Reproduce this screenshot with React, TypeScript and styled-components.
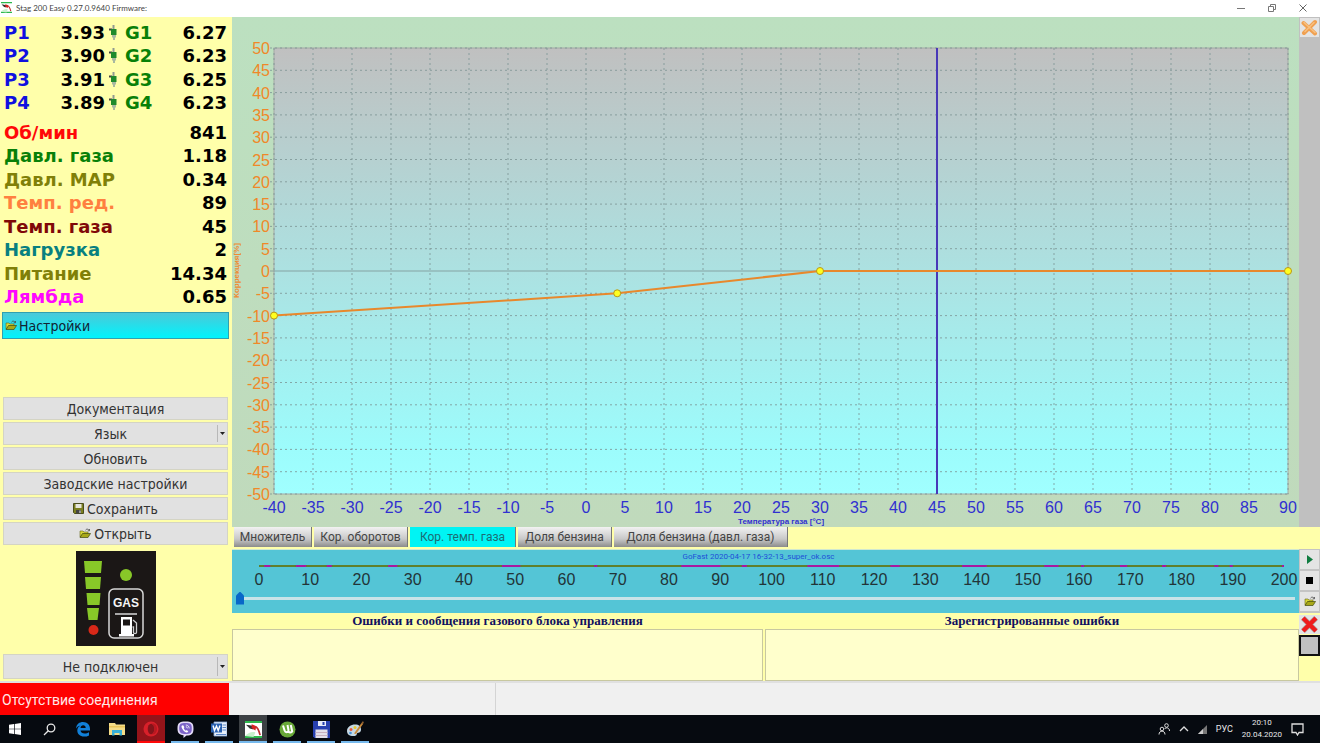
import React, { useState } from "react";
import styled, { createGlobalStyle } from "styled-components";

const GlobalStyle = createGlobalStyle`
  *, *::before, *::after { box-sizing: border-box; }
  body { margin: 0; background: #f0f0f0; }
  button, select, textarea, input { font: inherit; color: inherit; margin: 0; border-radius: 0; }
`;

const ui = `"DejaVu Sans Condensed", "DejaVu Sans", sans-serif`;
const arial = `"Liberation Sans", Arial, sans-serif`;
const segoe = `Roboto, "Open Sans", sans-serif`;

const Page = styled.div`
  display: flex;
  flex-direction: column;
  min-height: 100vh;
  font-family: ${ui};
  font-size: 14px;
  color: #333;
`;

/* ---------- window caption ---------- */

const TitleBar = styled.header`
  display: flex;
  align-items: center;
  height: 17px;
  padding: 0 11px 2px 1px;
  background: #fff;
  color: #444;
`;

const TitleText = styled.h1`
  flex: 1;
  margin: 0 0 0 4px;
  font: 400 8px/12px Lato, sans-serif;
`;

const CaptionButtons = styled.div`
  display: flex;
  gap: 19px;
`;

const CaptionButton = styled.button`
  display: grid;
  place-items: center;
  width: 12px;
  height: 12px;
  padding: 0;
  border: 0;
  background: none;
`;

/* ---------- frame ---------- */

const Body = styled.main`
  flex: 1;
  display: grid;
  grid-template-columns: 232px minmax(0, 1fr);
  background: #ffffaa;
`;

const Sidebar = styled.aside`
  display: flex;
  flex-direction: column;
  padding: 4px 3px 2px 3px;
`;

const Workspace = styled.section`
  display: flex;
  flex-direction: column;
`;

/* ---------- readings ---------- */

const Readings = styled.table<{ $height: number }>`
  width: 223px;
  height: ${(p) => p.$height}px;
  margin-left: 1px;
  border-collapse: collapse;
  font: 700 18px/18px "DejaVu Sans", sans-serif;
  color: #000;

  td, th { padding: 0; vertical-align: middle; white-space: nowrap; }
  td { text-align: right; }
`;

const InjectorReadings = styled(Readings)`
  table-layout: fixed;
`;

const ReadingName = styled.th<{ $color: string; $width?: number }>`
  width: ${(p) => (p.$width ? `${p.$width}px` : "auto")};
  text-align: left;
  color: ${(p) => p.$color};
`;

const PetrolCell = styled.td`
  width: 65px;
`;

const InjectorCell = styled.td`
  width: 20px;
  svg { display: block; margin-left: 3px; }
`;

const Gap = styled.div<{ $size: number }>`
  height: ${(p) => p.$size}px;
`;

/* ---------- sidebar controls ---------- */

const SettingsButton = styled.button`
  display: flex;
  align-items: center;
  gap: 2px;
  height: 27px;
  margin: 3px 0 0 -1px;
  padding: 0 2px;
  border: 1px solid #30a0b0;
  background: linear-gradient(#4cc8d8, #00f4fc);
  color: #123;
`;

const Spacer = styled.div`
  flex: 1;
`;

const ButtonStack = styled.div`
  display: grid;
  grid-auto-rows: 1fr;
  gap: 2px;
  height: 148px;
  margin-right: 1px;
`;

const PanelButton = styled.button`
  display: flex;
  align-items: center;
  justify-content: center;
  gap: 3px;
  padding: 0;
  border: 1px solid #d4d4c4;
  background: #e1e1e1;
`;

const SelectFrame = styled.div`
  display: grid;
  grid-template-columns: minmax(0, 1fr) 10px;
  border: 1px solid #d4d4c4;
  background: #e1e1e1;
`;

const Select = styled.select`
  min-width: 0;
  padding: 0;
  border: 0;
  appearance: none;
  background: none;
  text-align-last: center;
`;

const SelectArrow = styled.span`
  display: grid;
  place-items: center;
  margin: 2px 0;
  border-left: 1px solid #b8b8b8;
`;

const GasSwitch = styled.button`
  align-self: center;
  width: 80px;
  height: 95px;
  margin: 6px 0 8px;
  padding: 0;
  border: 0;
  background: #1b1716;
  svg { display: block; }
`;

const ConnectionBox = styled.div`
  display: grid;
  height: 25px;
  margin-right: 1px;
`;

/* ---------- chart ---------- */

const ChartRow = styled.div`
  flex: 1;
  display: grid;
  grid-template-columns: minmax(0, 1fr) 21px;
`;

const ChartPanel = styled.div`
  display: grid;
  grid-template-columns: 10px minmax(0, 1fr);
  padding: 31px 11px 33px 0;
  background: linear-gradient(#bce0c0, #c0dabc);
`;

const AxisTitleY = styled.div`
  display: flex;
  align-items: center;
  justify-content: center;
  writing-mode: vertical-rl;
  transform: rotate(180deg);
  font: 700 8px/10px ${arial};
  color: #f08a30;
`;

const Plot = styled.svg`
  display: block;
  width: calc(100% - 32px);
  height: 100%;
  margin-left: 32px;
  overflow: visible;
  font-family: ${arial};
  font-size: 16px;
`;

const ToolStrip = styled.div`
  padding: 1px 1px 0;
  background: #c0c0c0;
`;

const ToolButton = styled.button`
  display: grid;
  place-items: center;
  width: 100%;
  height: 19px;
  padding: 0;
  border: 0;
  background: #e4e4e4;
`;

/* ---------- tabs ---------- */

const Tabs = styled.div`
  display: flex;
  gap: 2px;
  height: 22px;
  padding: 0 2px 2px;
`;

const Tab = styled.button<{ $active?: boolean; $width: number }>`
  width: ${(p) => p.$width}px;
  padding: 0;
  border: 0;
  border-right: 1px solid #777;
  background: ${(p) => (p.$active ? "#00f4f4" : "linear-gradient(#f2f2f2, #c8c8c8 60%, #8c8c8c)")};
  font: 12px/18px ${segoe};
  color: ${(p) => (p.$active ? "#1c6c74" : "#444")};
  white-space: nowrap;
`;

/* ---------- recorder ---------- */

const RecorderRow = styled.div`
  display: grid;
  grid-template-columns: minmax(0, 1fr) 21px;
  background: #c4c4c4;
`;

const Recorder = styled.div`
  display: flex;
  flex-direction: column;
  height: 64px;
  border-top: 1px solid #d0e8d0;
  background: #54c5d6;
`;

const FileName = styled.div`
  height: 15px;
  padding-right: 14px;
  text-align: center;
  font: 8px/14px ${segoe};
  color: #2050d8;
`;

const Timeline = styled.svg`
  display: block;
  width: calc(100% - 42px);
  height: 26px;
  margin-left: 27px;
  overflow: visible;
  font-family: ${arial};
  font-size: 16px;
`;

const Seek = styled.input`
  width: calc(100% - 8px);
  height: 14px;
  margin: 0 4px;
  appearance: none;
  background: linear-gradient(#c8e4e8, #c8e4e8) center / 100% 3px no-repeat;

  &::-webkit-slider-thumb {
    appearance: none;
    width: 8px;
    height: 13px;
    background: #0868c8;
    clip-path: polygon(0 30%, 50% 0, 100% 30%, 100% 100%, 0 100%);
  }
`;

const RecorderTools = styled.div`
  display: grid;
  grid-template-rows: repeat(3, 19px);
  gap: 2px;
  padding: 1px;
`;

/* ---------- error lists ---------- */

const Errors = styled.div`
  display: grid;
  grid-template-columns: minmax(0, 1fr) 21px;
`;

const ErrorLists = styled.div`
  display: grid;
  grid-template-columns: 531px minmax(0, 1fr);
  gap: 2px;
`;

const ErrorField = styled.label`
  display: flex;
  flex-direction: column;
  font: 700 13px/16px "Liberation Serif", serif;
  color: #101060;
  text-align: center;
`;

const ErrorText = styled.textarea`
  height: 52px;
  border: 1px solid #c8c8a0;
  outline: 0;
  background: #ffffcc;
  resize: none;
`;

const ErrorTools = styled.div`
  padding: 2px 0 0;
`;

const Swatch = styled.button`
  display: block;
  width: 21px;
  height: 21px;
  margin-top: 1px;
  border: 2px solid #111;
  background: #c0c0c0;
`;

/* ---------- status line ---------- */

const StatusBar = styled.footer`
  display: grid;
  grid-template-columns: 229px 267px minmax(0, 1fr);
  height: 34px;
  border-top: 2px solid #e0e0e0;
  background: #f0f0f0;
`;

const ConnectionStatus = styled.div`
  padding-left: 2px;
  background: #ff0000;
  color: #ffe8e8;
  font: 14px/34px ${segoe};
`;

const StatusCell = styled.div`
  border-right: 1px solid #d4d4d4;
`;

/* ---------- taskbar ---------- */

const Taskbar = styled.nav`
  display: flex;
  height: 28px;
  background: #060a10;
  color: #e8e8e8;
`;

const TaskList = styled.div`
  display: flex;
  flex: 1;
  gap: 6px;
  padding-left: 1px;
`;

const Task = styled.button<{ $bg?: string; $line?: string }>`
  display: grid;
  place-items: center;
  width: 28px;
  height: 28px;
  padding: 2px 0 0;
  border: 0;
  border-bottom: 2px solid ${(p) => p.$line ?? "transparent"};
  background: ${(p) => p.$bg ?? "none"};
`;

const Tray = styled.div`
  display: flex;
  align-items: center;
  gap: 9px;
  padding-right: 16px;
  font: 9px/12px ${segoe};
`;

const Clock = styled.time`
  text-align: center;
  font-size: 8px;
`;

/* ---------- drawings ---------- */

const FolderIcon = () => (
  <svg width="12" height="11" viewBox="0 0 12 11" aria-hidden="true">
    <path d="M1 9V3h3l1 1h4v2H4z" fill="#d8d838" stroke="#66661a" strokeWidth="0.6" />
    <path d="M1 9.500l2.500-4H11.500L9 9.500z" fill="#a8a818" stroke="#444a10" strokeWidth="0.7" />
    <path d="M6.500 2.200c1-1.500 2.500-1.300 3.500 0M10.500 1v1.800H8.800" fill="none" stroke="#444" strokeWidth="0.800" />
  </svg>
);

const DiskIcon = () => (
  <svg width="11" height="11" viewBox="0 0 11 11" aria-hidden="true">
    <path d="M.5.5h10v10H1.500l-1-1z" fill="#7c8020" stroke="#4a4d1c" />
    <path d="M2.500 1h6v4h-6z" fill="#e6e6dc" />
    <path d="M3 7h5v3.500H3z" fill="#444" />
    <path d="M6.500 7.500h1V10h-1z" fill="#eee" />
  </svg>
);

const InjectorIcon = () => (
  <svg width="10" height="16" viewBox="0 0 10 16" aria-hidden="true">
    <path d="M4.500 0h2v4h-2z" fill="#909a90" />
    <path d="M1 3.500h3v2H1z" fill="#444" />
    <path d="M3 4h5.500v6H3z" fill="#1e8a2c" />
    <path d="M4 10h4v2.500H4zM5 12.500h2v2.500H5z" fill="#a8b8a0" />
  </svg>
);

const DownArrow = () => (
  <svg width="5" height="3" viewBox="0 0 5 3" aria-hidden="true">
    <path d="M0 0h5L2.500 3z" fill="#222" />
  </svg>
);

const StagLogo = ({ size }: { size: number }) => (
  <svg width={size} height={size} viewBox="0 0 18 18" aria-hidden="true">
    <path d="M0 0h18v18H0z" fill="#fff" />
    <path d="M0 0h18v2H0zM0 16h18v2H0z" fill="#2cb84c" />
    <path d="M1 4c3 0 5 1 7 1l1 4-4-1z" fill="#333" />
    <path d="M7 3.500l5 2-1 4.500-4-2.500z" fill="#d82020" />
    <path d="M11 6c3 1 4 5 5 9" fill="none" stroke="#c03030" strokeWidth="1.800" />
    <path d="M0 16c4-4 7-5 11-4l-2 5z" fill="#c8f0cc" />
  </svg>
);

const GasPanelIcon = () => (
  <svg width="80" height="95" viewBox="0 0 80 95" role="img" aria-label="GAS">
    <g fill="#88c828">
      <path d="M8 10h18l-1 12H9z" />
      <path d="M9 26h16l-1 12H10z" />
      <path d="M10.500 42h14l-1 12h-12z" />
      <path d="M11 57h12l-1.500 12h-9z" />
      <circle cx="50" cy="24" r="6" />
    </g>
    <circle cx="17.500" cy="79" r="5" fill="#d82818" />
    <rect x="33" y="38" width="34" height="49" rx="5" fill="none" stroke="#d8d8d8" strokeWidth="1.500" />
    <text x="50" y="56" textAnchor="middle" fill="#f4f4f4" fontFamily="Liberation Sans, sans-serif" fontWeight="700" fontSize="12">GAS</text>
    <path d="M39 63h22" stroke="#d8d8d8" strokeWidth="1.500" />
    <path d="M45 66h11v17h2v2.500H43V83h2z" fill="#fff" />
    <path d="M47 68.500h7v6h-7z" fill="#1b1716" />
    <path d="M57 69l3.500 3v9.500c0 1.500-3 1.500-3 0V76h-1" fill="none" stroke="#d0d0d0" strokeWidth="1.300" />
  </svg>
);

/* ---------- data ---------- */

const injectors = [
  { n: 1, petrol: "3.93", gas: "6.27" },
  { n: 2, petrol: "3.90", gas: "6.23" },
  { n: 3, petrol: "3.91", gas: "6.25" },
  { n: 4, petrol: "3.89", gas: "6.23" },
];

const sensors = [
  { name: "Об/мин", value: "841", color: "#ff0808" },
  { name: "Давл. газа", value: "1.18", color: "#088008" },
  { name: "Давл. MAP", value: "0.34", color: "#808008" },
  { name: "Темп. ред.", value: "89", color: "#ff8040" },
  { name: "Темп. газа", value: "45", color: "#800808" },
  { name: "Нагрузка", value: "2", color: "#088080" },
  { name: "Питание", value: "14.34", color: "#808008" },
  { name: "Лямбда", value: "0.65", color: "#ff08ff" },
];

const curve: [number, number][] = [[-40, -10], [4, -5], [30, 0], [90, 0]];
const currentTemperature = 45;

const range = (from: number, to: number, step: number) =>
  Array.from({ length: (to - from) / step + 1 }, (_, i) => from + i * step);

const px = (t: number) => `${((t + 40) / 130) * 100}%`;
const py = (c: number) => `${50 - c}%`;

const petrolSpans: [number, number][] = [
  [1, 2.200], [7.200, 9.200], [13.200, 14.200], [25.200, 27], [47.400, 51], [65.400, 66], [82.400, 90],
  [94.200, 95.200], [107, 113.200], [123.200, 125], [137.200, 142], [153.200, 156], [160.400, 161],
  [168, 169.400], [176.200, 177], [186.400, 187.200], [189.400, 190], [199.600, 200],
];

const tabs = [
  { name: "Множитель", width: 78 },
  { name: "Кор. оборотов", width: 94 },
  { name: "Кор. темп. газа", width: 106 },
  { name: "Доля бензина", width: 94 },
  { name: "Доля бензина (давл. газа)", width: 174 },
];

/* ---------- parts ---------- */

function CorrectionChart() {
  return (
    <ChartPanel>
      <AxisTitleY>Коррекция[%]</AxisTitleY>
      <Plot role="img" aria-label="Коррекция по температуре газа">
        <defs>
          <linearGradient id="plotFill" x1="0" y1="0" x2="0" y2="1">
            <stop offset="0" stopColor="#c0c0c0" />
            <stop offset="0.900" stopColor="#9cfcfc" />
            <stop offset="1" stopColor="#a0ffff" />
          </linearGradient>
        </defs>
        <rect width="100%" height="100%" fill="url(#plotFill)" stroke="#a4a8a4" />
        {range(-50, 50, 5).map((c) => (
          <g key={c}>
            <line x1="-4" x2="100%" y1={py(c)} y2={py(c)} stroke="#7c9494" strokeOpacity="0.800" strokeDasharray={c === 0 ? undefined : "2 3"} />
            <text x="-4" y={py(c)} dy="6" textAnchor="end" fill="#f08828">{c}</text>
          </g>
        ))}
        {range(-40, 90, 5).map((t) => (
          <g key={t}>
            <line x1={px(t)} x2={px(t)} y1="0" y2="100%" stroke="#7c9494" strokeOpacity="0.800" strokeDasharray="2 3" />
            <text x={px(t)} y="100%" dy="19" textAnchor="middle" fill="#3030d0">{t}</text>
          </g>
        ))}
        <line x1={px(currentTemperature)} x2={px(currentTemperature)} y1="0" y2="100%" stroke="#4838b8" strokeWidth="2" />
        {curve.slice(1).map(([t, c], i) => (
          <line key={t} x1={px(curve[i][0])} y1={py(curve[i][1])} x2={px(t)} y2={py(c)} stroke="#e8882c" strokeWidth="2" />
        ))}
        {curve.map(([t, c]) => (
          <circle key={t} cx={px(t)} cy={py(c)} r="3.500" fill="#ffff20" stroke="#b89818" />
        ))}
        <text x="50%" y="100%" dy="30" textAnchor="middle" fontSize="8" fontWeight="700" fill="#3030d0">
          Температура газа [°C]
        </text>
      </Plot>
    </ChartPanel>
  );
}

function RecorderPanel() {
  const [position, setPosition] = useState(0);
  return (
    <RecorderRow>
      <Recorder>
        <FileName>GoFast 2020-04-17 16-32-13_super_ok.osc</FileName>
        <Timeline aria-hidden="true">
          <rect width="100%" height="2" y="0" fill="#60802c" />
          {petrolSpans.map(([a, b]) => (
            <rect key={a} x={`${a / 2}%`} width={`${(b - a) / 2}%`} height="2" fill="#a818a0" />
          ))}
          {range(0, 200, 10).map((v) => (
            <text key={v} x={`${v / 2}%`} y="20" textAnchor="middle" fill="#223438">{v}</text>
          ))}
        </Timeline>
        <Seek
          type="range"
          min={0}
          max={200}
          value={position}
          aria-label="Позиция записи"
          onChange={(e) => setPosition(Number(e.target.value))}
        />
      </Recorder>
      <RecorderTools>
        <ToolButton aria-label="Воспроизвести">
          <svg width="6" height="9" viewBox="0 0 6 9"><path d="M0 0l6 4.500L0 9z" fill="#107c40" /></svg>
        </ToolButton>
        <ToolButton aria-label="Стоп">
          <svg width="7" height="7"><rect width="7" height="7" fill="#000" /></svg>
        </ToolButton>
        <ToolButton aria-label="Открыть запись"><FolderIcon /></ToolButton>
      </RecorderTools>
    </RecorderRow>
  );
}

function WindowsTaskbar() {
  const blue = "#76b9ed";
  return (
    <Taskbar aria-label="Панель задач">
      <TaskList>
        <Task aria-label="Пуск">
          <svg width="12" height="12" viewBox="0 0 12 12" fill="#fff">
            <path d="M0 1.700l5-.7v4.700H0zM5.700.9L12 0v5.700H5.700zM0 6.300h5V11l-5-.7zM5.700 6.300H12V12l-6.300-.9z" />
          </svg>
        </Task>
        <Task aria-label="Поиск">
          <svg width="13" height="13" viewBox="0 0 13 13" fill="none" stroke="#e8e8e8" strokeWidth="1.300">
            <circle cx="8" cy="5" r="3.800" /><path d="M5.300 7.800L1 12" />
          </svg>
        </Task>
        <Task aria-label="Edge">
          <svg width="16" height="16" viewBox="0 0 16 16">
            <path d="M1 7.500C1.500 3 4.500 1 8 1c4.500 0 7 3.200 7 7v1.500H5.500c.2 2 2 3 4.200 3 1.700 0 3-.5 4.300-1.300v3.200c-1.500.8-3 1.200-5 1.200-4 0-6.700-2.400-6.700-6 0-2.200 1.200-4 3.200-5C3.500 5.200 2 6 1 7.500zM5.500 7h5.200c0-1.800-1-2.700-2.500-2.700S5.700 5.300 5.500 7z" fill="#1180d8" />
          </svg>
        </Task>
        <Task aria-label="Проводник">
          <svg width="16" height="14" viewBox="0 0 16 14">
            <path d="M0 1h6l1 1.500h9V13H0z" fill="#f4dc88" /><path d="M0 4h16v1.500H0z" fill="#e8c458" />
            <path d="M3 8h10v5.500h-2.500V11h-5v2.500H3z" fill="#38b0d8" />
          </svg>
        </Task>
        <Task aria-label="Opera" $bg="#94141a" $line="#ff0808">
          <svg width="16" height="16" viewBox="0 0 16 16">
            <circle cx="8" cy="8" r="7.500" fill="#d8202a" /><ellipse cx="8" cy="8" rx="3.300" ry="5.200" fill="#84141a" />
            <path d="M8 2.800c4-1 6 2 6 5.200s-2 6-6 5.200c3-.5 3.300-3 3.300-5.200S11 3.300 8 2.800z" fill="#b81820" />
          </svg>
        </Task>
        <Task aria-label="Viber" $line={blue}>
          <svg width="17" height="17" viewBox="0 0 17 17">
            <path d="M8.500.5c6 0 8 1.500 8 7s-2 7-7 7L6.500 17v-2.800C2 13.500.5 12 .5 7.500c0-5.500 2-7 8-7z" fill="#e4dcf8" />
            <path d="M8.500 2c5 0 6.300 1 6.300 5.500s-1.500 5.500-6 5.500-6.600-1-6.600-5.500S3.500 2 8.500 2z" fill="#7c64c8" />
            <path d="M5 4.500c-.8.800-.6 1.600.1 3 1 1.900 2.300 3.200 4 3.900 1 .4 1.600 0 2.200-.9L9.800 9l-.9.700C7.800 9.100 7 8.200 6.700 7l.7-.8-1.200-2z" fill="#fff" />
            <path d="M8.800 4c2.200.1 3.300 1.400 3.400 3.400M8.900 5.700c1 .1 1.500.7 1.600 1.600" fill="none" stroke="#fff" strokeWidth="0.800" />
          </svg>
        </Task>
        <Task aria-label="Word" $line={blue}>
          <svg width="16" height="16" viewBox="0 0 16 16">
            <path d="M3 1h13v14H3z" fill="#e8f0fa" stroke="#88a8d8" strokeWidth="0.800" />
            <path d="M11.500 4H15M11.500 6.500H15M11.500 9H15M5 13.500h10" stroke="#5c88c8" />
            <path d="M0 2.500h11v9H0z" fill="#2860b0" />
            <path d="M2 4.500l1.500 5 2-4.500 1.700 4.500 1.800-5" fill="none" stroke="#fff" strokeWidth="1.400" />
          </svg>
        </Task>
        <Task aria-label="Stag 200 Easy" $bg="#3c4044" $line={blue}><StagLogo size={17} /></Task>
        <Task aria-label="uTorrent" $line={blue}>
          <svg width="17" height="17" viewBox="0 0 17 17">
            <circle cx="8.500" cy="8.500" r="8" fill="#68a838" />
            <path d="M4 4.500l1.600 5c.8 2.500 4.300 2 3.800-.7L8.500 4M9.200 10c.8 1.800 2.600 1.800 4 .5L11.800 4" fill="none" stroke="#fff" strokeWidth="2" />
          </svg>
        </Task>
        <Task aria-label="Total Commander" $line={blue}>
          <svg width="17" height="17" viewBox="0 0 17 17">
            <path d="M0 0h17v17H1.500L0 15.500z" fill="#2840b0" /><path d="M5 0h8v5H5z" fill="#e8ecfa" />
            <path d="M9.500 1h2v3h-2z" fill="#2840b0" /><path d="M2.500 8.500h12V17h-12z" fill="#e4e0ea" /><path d="M2.500 11h12v1h-12zM2.500 14h12v1h-12z" fill="#c8b0c0" />
          </svg>
        </Task>
        <Task aria-label="Paint" $line={blue}>
          <svg width="18" height="17" viewBox="0 0 18 17">
            <path d="M1 10c0-4 4-6.500 8-6.500s6 2 6 5-2 3-3.500 3.500.5 3-4 3S1 13 1 10z" fill="#c4d8e4" />
            <circle cx="5" cy="8.500" r="1.500" fill="#e85838" /><circle cx="9" cy="6.500" r="1.500" fill="#e8c830" /><circle cx="4.500" cy="12" r="1.300" fill="#4890d8" />
            <path d="M8 12.500L15.500 2l1.500 1-7 10z" fill="#c88838" /><path d="M15 2.500L17 0l.8 1.500L16.500 4z" fill="#906030" />
          </svg>
        </Task>
      </TaskList>
      <Tray>
        <svg width="12" height="12" viewBox="0 0 12 12" fill="none" stroke="#ddd" aria-hidden="true">
          <circle cx="4" cy="6" r="1.800" /><path d="M1 11.500c0-4.500 6-4.500 6 0" />
          <circle cx="8.500" cy="2.500" r="1.800" /><path d="M6.500 6c1.500-2 5-1.500 5 2" />
        </svg>
        <svg width="10" height="6" viewBox="0 0 10 6" fill="none" stroke="#ddd" strokeWidth="1.300" aria-hidden="true"><path d="M1 5l4-4 4 4" /></svg>
        <svg width="9" height="9" viewBox="0 0 9 9" aria-hidden="true">
          <path d="M0 9L9 0v9z" fill="#777" /><path d="M0 9l5-5v5z" fill="#ccc" />
        </svg>
        <span>РУС</span>
        <Clock dateTime="2020-04-20T20:10">20:10<br />20.04.2020</Clock>
        <svg width="13" height="13" viewBox="0 0 13 13" fill="none" stroke="#ddd" strokeWidth="1.300" aria-hidden="true">
          <path d="M1 1h11v8.500H8L6.500 12 5 9.500H1z" />
        </svg>
      </Tray>
    </Taskbar>
  );
}

export default function App() {
  const [tab, setTab] = useState(2);
  return (
    <Page>
      <GlobalStyle />
      <TitleBar>
        <StagLogo size={11} />
        <TitleText>Stag 200 Easy 0.27.0.9640 Firmware:</TitleText>
        <CaptionButtons>
          <CaptionButton aria-label="Свернуть"><svg width="8" height="8"><path d="M0 4.500h8" stroke="#777" /></svg></CaptionButton>
          <CaptionButton aria-label="Развернуть">
            <svg width="8" height="8" fill="none" stroke="#777"><path d="M.5 2.500h5v5h-5zM2.500 2V.5h5v5H6" /></svg>
          </CaptionButton>
          <CaptionButton aria-label="Закрыть"><svg width="8" height="8"><path d="M.5.5l7 7M7.500.5l-7 7" stroke="#666" /></svg></CaptionButton>
        </CaptionButtons>
      </TitleBar>

      <Body>
        <Sidebar>
          <InjectorReadings $height={94}>
            <tbody>
              {injectors.map((i) => (
                <tr key={i.n}>
                  <ReadingName scope="row" $color="#1010e0" $width={36}>P{i.n}</ReadingName>
                  <PetrolCell>{i.petrol}</PetrolCell>
                  <InjectorCell><InjectorIcon /></InjectorCell>
                  <ReadingName scope="row" $color="#088008" $width={36}>G{i.n}</ReadingName>
                  <td>{i.gas}</td>
                </tr>
              ))}
            </tbody>
          </InjectorReadings>
          <Gap $size={6} />
          <Readings $height={188}>
            <tbody>
              {sensors.map((s) => (
                <tr key={s.name}>
                  <ReadingName scope="row" $color={s.color}>{s.name}</ReadingName>
                  <td>{s.value}</td>
                </tr>
              ))}
            </tbody>
          </Readings>

          <SettingsButton><FolderIcon />Настройки</SettingsButton>
          <Spacer />

          <ButtonStack>
            <PanelButton>Документация</PanelButton>
            <SelectFrame>
              <Select aria-label="Язык" defaultValue="Язык"><option>Язык</option></Select>
              <SelectArrow><DownArrow /></SelectArrow>
            </SelectFrame>
            <PanelButton>Обновить</PanelButton>
            <PanelButton>Заводские настройки</PanelButton>
            <PanelButton><DiskIcon />Сохранить</PanelButton>
            <PanelButton><FolderIcon />Открыть</PanelButton>
          </ButtonStack>
          <GasSwitch aria-label="Переключатель газ/бензин"><GasPanelIcon /></GasSwitch>
          <ConnectionBox>
            <SelectFrame>
              <Select aria-label="Подключение" defaultValue="Не подключен"><option>Не подключен</option></Select>
              <SelectArrow><DownArrow /></SelectArrow>
            </SelectFrame>
          </ConnectionBox>
        </Sidebar>

        <Workspace>
          <ChartRow>
            <CorrectionChart />
            <ToolStrip>
              <ToolButton aria-label="Инструменты">
                <svg width="17" height="17" viewBox="0 0 17 17" fill="none" strokeLinecap="round">
                  <path d="M2.500 4L14 14.500M14 3L3 14" stroke="#f0a050" strokeWidth="4" />
                  <path d="M3 3.500L14 13.500M13 3.500L4 12.500" stroke="#f8c080" strokeWidth="1.500" />
                </svg>
              </ToolButton>
            </ToolStrip>
          </ChartRow>

          <Tabs role="tablist">
            {tabs.map(({ name, width }, i) => (
              <Tab key={name} role="tab" aria-selected={i === tab} $active={i === tab} $width={width} onClick={() => setTab(i)}>
                {name}
              </Tab>
            ))}
          </Tabs>

          <RecorderPanel />

          <Errors>
            <ErrorLists>
              <ErrorField>Ошибки и сообщения газового блока управления<ErrorText readOnly /></ErrorField>
              <ErrorField>Зарегистрированные ошибки<ErrorText readOnly /></ErrorField>
            </ErrorLists>
            <ErrorTools>
              <ToolButton aria-label="Удалить ошибки">
                <svg width="17" height="17" viewBox="0 0 17 17" fill="none">
                  <path d="M2 2l13 13M15 2L2 15" stroke="#a8b0b0" strokeWidth="5.500" />
                  <path d="M2 2l13 13M15 2L2 15" stroke="#ee1c1c" strokeWidth="4.300" />
                </svg>
              </ToolButton>
              <Swatch aria-label="Цвет" />
            </ErrorTools>
          </Errors>
        </Workspace>
      </Body>

      <StatusBar>
        <ConnectionStatus role="status">Отсутствие соединения</ConnectionStatus>
        <StatusCell />
      </StatusBar>

      <WindowsTaskbar />
    </Page>
  );
}
